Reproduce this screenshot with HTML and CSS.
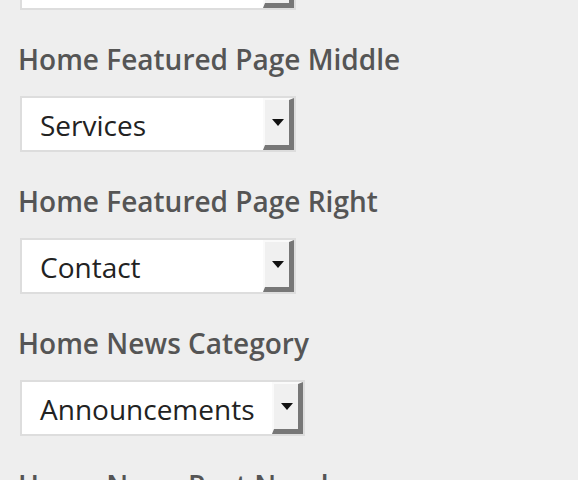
FILE: index.html
```html
<!DOCTYPE html>
<html lang="en">
<head>
  <meta charset="UTF-8" />
  <meta name="viewport" content="width=device-width, initial-scale=1.0"/>
  <title>Theme Options</title>
  <link rel="stylesheet" href="styles.css">
</head>
<body>
  <div class="options">
    <div class="field">
      <label class="field-label">Home Featured Page Left</label>
      <div class="select wide-page">
        <span class="select-value">About</span>
        <span class="select-btn"><i class="arrow"></i></span>
      </div>
    </div>

    <div class="field">
      <label class="field-label">Home Featured Page Middle</label>
      <div class="select wide-page">
        <span class="select-value">Services</span>
        <span class="select-btn"><i class="arrow"></i></span>
      </div>
    </div>

    <div class="field">
      <label class="field-label">Home Featured Page Right</label>
      <div class="select wide-page">
        <span class="select-value">Contact</span>
        <span class="select-btn"><i class="arrow"></i></span>
      </div>
    </div>

    <div class="field">
      <label class="field-label">Home News Category</label>
      <div class="select wide-cat">
        <span class="select-value">Announcements</span>
        <span class="select-btn"><i class="arrow"></i></span>
      </div>
    </div>

    <div class="field">
      <label class="field-label">Home News Post Number</label>
      <div class="select wide-num">
        <span class="select-value">3</span>
        <span class="select-btn"><i class="arrow"></i></span>
      </div>
    </div>
  </div>
</body>
</html>
```

FILE: styles.css
```css
body {
  margin: 0;
  padding: 0;
  background-color: #eeeeee;
  font-family: 'Open Sans', 'Noto Sans', sans-serif;
  overflow: hidden;
}
.options {
  margin-top: -102px;
  padding: 0 20px;
}
.field {
  margin-bottom: 30px;
}
.field-label {
  display: block;
  font-size: 28px;
  font-weight: 600;
  line-height: 38px;
  color: #555555;
  margin-left: -2px;
  margin-bottom: 18px;
}
.select {
  display: flex;
  height: 56px;
  box-sizing: border-box;
  border: 2px solid #dddddd;
  background: #ffffff;
}
.wide-page { width: 276px; }
.wide-cat { width: 285px; }
.wide-num { width: 120px; }
.select-value {
  flex: 1;
  padding-left: 18px;
  padding-top: 1px;
  font-size: 28px;
  line-height: 52px;
  color: #222222;
  white-space: nowrap;
}
.select-btn {
  width: 31px;
  box-sizing: border-box;
  background: #f0f0f0;
  border-top: 2px solid #fafafa;
  border-left: 2px solid #fafafa;
  border-right: 5px solid #777777;
  border-bottom: 5px solid #777777;
  display: flex;
  align-items: center;
  justify-content: center;
}
.arrow {
  display: block;
  width: 0;
  height: 0;
  border-left: 6px solid transparent;
  border-right: 6px solid transparent;
  border-top: 7px solid #111111;
  margin-left: 2px;
}
```
